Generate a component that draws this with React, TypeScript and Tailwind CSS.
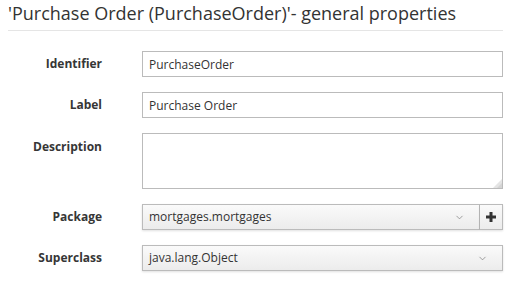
import { ChevronDown } from "lucide-react";

const Row = ({ label, children, top }: { label: string; children: React.ReactNode; top?: boolean }) => (
  <div className={`flex ${top ? "items-start" : "items-center"} mb-[15px]`}>
    <label className={`w-[94px] shrink-0 text-right font-bold text-[12px] text-[#363636] ${top ? "pt-[5px]" : ""}`}>
      {label}
    </label>
    <div className="ml-[40px] flex-1">{children}</div>
  </div>
);

const Select = ({ value }: { value: string }) => (
  <div className="flex h-[26px] items-center justify-between border border-[#bbb] bg-gradient-to-b from-[#fafafa] to-[#ececec] pl-[6px] pr-[14px] text-[12px] text-[#333] shadow-[0_1px_2px_rgba(0,0,0,0.12)]">
    <span>{value}</span>
    <ChevronDown size={11} strokeWidth={1.5} className="text-[#777]" />
  </div>
);

export default function App() {
  return (
    <div className="w-[519px] h-[285px] bg-white pl-[8px] pr-[16px]" style={{ fontFamily: '"Open Sans", sans-serif' }}>
      <h2 className="pt-[1px] pb-[4px] text-[18px] leading-[25px] text-[#333] border-b border-[#e5e5e5]">
        'Purchase Order (PurchaseOrder)'- general properties
      </h2>
      <div className="mt-[20px]">
        <Row label="Identifier">
          <input readOnly value="PurchaseOrder" className="block w-full h-[26px] border border-[#bbb] px-[6px] text-[12px] text-[#333] outline-none" />
        </Row>
        <Row label="Label">
          <input readOnly value="Purchase Order" className="block w-full h-[26px] border border-[#bbb] px-[6px] text-[12px] text-[#333] outline-none" />
        </Row>
        <Row label="Description" top>
          <div className="relative">
            <textarea readOnly className="block w-full h-[56px] resize-none border border-[#bbb] px-[6px] text-[12px] outline-none" />
            <svg className="absolute bottom-[1px] right-[1px]" width="9" height="9" viewBox="0 0 9 9">
              <path d="M9 0 L9 9 L0 9 Z" fill="#e4e4e4" />
              <path d="M9 4 L9 9 L4 9 Z" fill="#d4d4d4" />
            </svg>
          </div>
        </Row>
        <Row label="Package">
          <div className="flex">
            <div className="flex-1">
              <Select value="mortgages.mortgages" />
            </div>
            <button className="flex h-[26px] w-[23px] items-center justify-center border border-l-0 border-[#bbb] bg-gradient-to-b from-[#fafafa] to-[#ececec] shadow-[0_1px_2px_rgba(0,0,0,0.12)]">
              <svg width="10" height="10" viewBox="0 0 10 10">
                <rect x="3.5" y="0" width="3" height="10" fill="#333" />
                <rect x="0" y="3.5" width="10" height="3" fill="#333" />
              </svg>
            </button>
          </div>
        </Row>
        <Row label="Superclass">
          <Select value="java.lang.Object" />
        </Row>
      </div>
    </div>
  );
}
